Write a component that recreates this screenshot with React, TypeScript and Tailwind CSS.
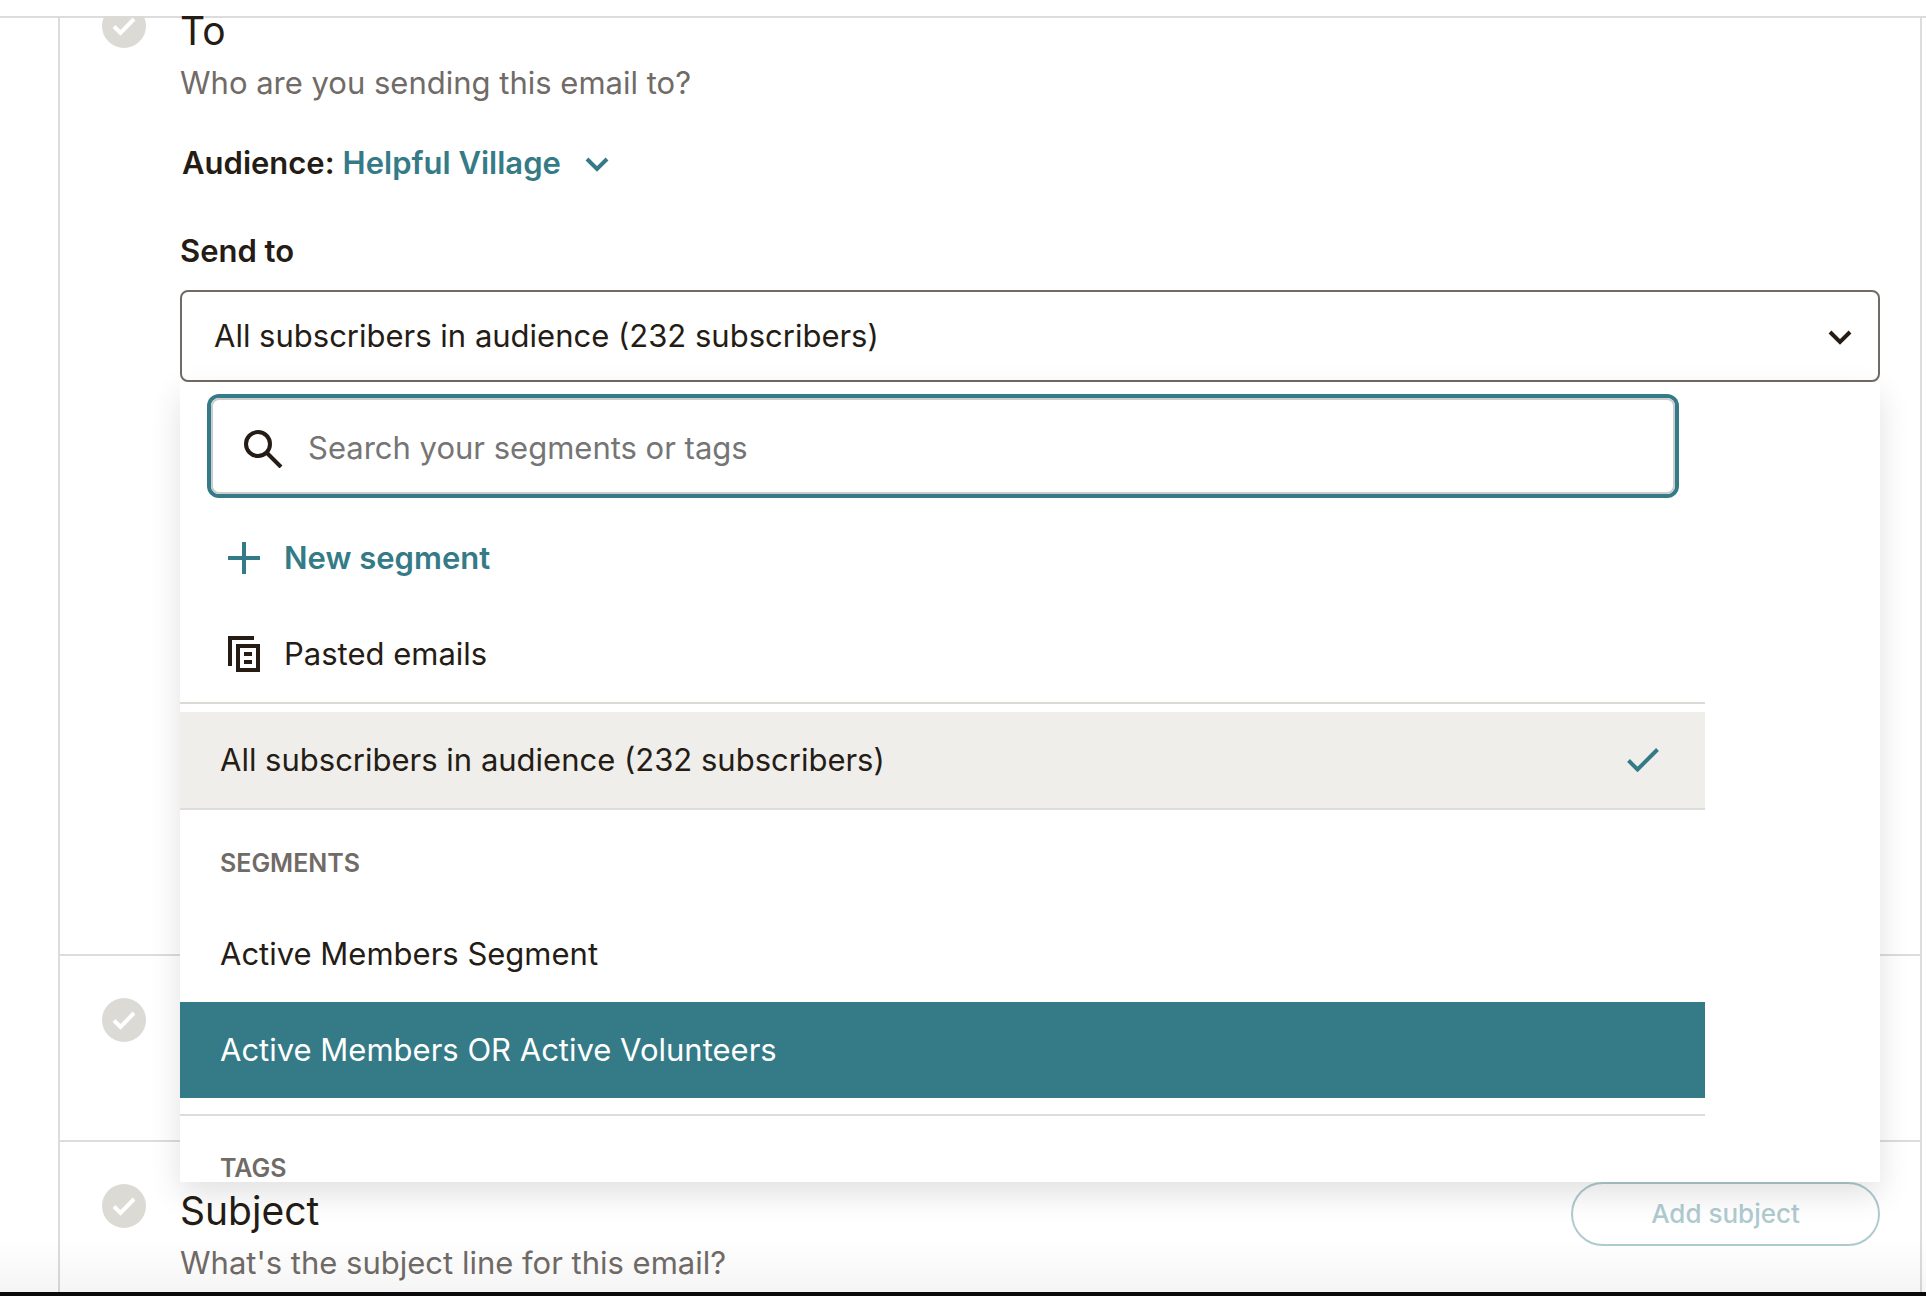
import React, { useState } from 'react';

const CheckCircle = () => (
    <svg width="44" height="44" viewBox="0 0 44 44" className="mt-0.5 shrink-0" aria-hidden="true">
        <circle cx="22" cy="22" r="22" fill="#dbdad5" />
        <path d="M12 22.5L18.5 29L32 15" fill="none" stroke="#fff" strokeWidth="4" />
    </svg>
);

const Chevron = () => (
    <svg width="24" height="24" viewBox="0 0 24 24" aria-hidden="true">
        <path d="M2 8L12 18L22 8" fill="none" stroke="currentColor" strokeWidth="4" />
    </svg>
);

const SearchIcon = () => (
    <svg width="40" height="40" viewBox="0 0 40 40" fill="none" stroke="#241c15" strokeWidth="4" className="shrink-0" aria-hidden="true">
        <circle cx="14" cy="16" r="12" />
        <path d="M22.5 24.5L37 39" />
    </svg>
);

const PlusIcon = () => (
    <svg width="32" height="32" viewBox="0 0 32 32" className="shrink-0" aria-hidden="true">
        <path d="M16 0V32M0 16H32" stroke="currentColor" strokeWidth="4" />
    </svg>
);

const PasteIcon = () => (
    <svg width="32" height="36" viewBox="0 0 32 36" fill="none" stroke="currentColor" strokeWidth="4" className="shrink-0" aria-hidden="true">
        <path d="M26 2H2V30M10 10H30V34H10ZM16 18H24M16 26H24" />
    </svg>
);

export default function App() {
    const [query, setQuery] = useState('');

    return (
        <div className="h-screen flex flex-col overflow-hidden bg-white pt-4 font-['Inter','Liberation_Sans',sans-serif] text-[31px] leading-[48px] text-[#241c15]">
            <main className="relative flex-1 min-h-0 overflow-hidden">
                <div className="h-0.5 bg-[#dcdcdc]" />
                <div className="ml-[58px] mr-1 -mt-4 border-x-2 border-[#dcdcdc]">
                    {/* To */}
                    <section className="flex h-[954px] gap-[34px] border-b-2 border-[#dcdcdc] pl-[42px] pr-10">
                        <CheckCircle />
                        <div className="flex-1 min-w-0">
                            <h2 className="text-[39px] leading-[57px]">To</h2>
                            <p className="text-[#706b67]">Who are you sending this email to?</p>
                            <p className="mt-8 flex items-center pl-[2px] font-semibold">
                                Audience:
                                <button className="ml-2 flex items-center gap-6 text-[#357b87]">
                                    Helpful Village <Chevron />
                                </button>
                            </p>
                            <p id="send-to" className="mt-10 font-semibold">Send to</p>

                            <div className="relative mt-[15px]">
                                <button aria-labelledby="send-to" className="flex h-[92px] w-full items-center justify-between rounded-lg border-2 border-[#706b67] pl-8 pr-[26px]">
                                    All subscribers in audience (232 subscribers)
                                    <Chevron />
                                </button>

                                {/* Dropdown */}
                                <div className="absolute inset-x-0 top-full z-10 h-[800px] bg-white shadow-[0_12px_30px_rgba(0,0,0,0.12)]">
                                    <div className="mr-[175px] h-full overflow-hidden">
                                        <label className="ml-[31px] mr-[30px] mt-4 flex h-24 items-center gap-6 rounded-lg border-2 border-[#cccccc] pl-[31px] pt-1 ring-4 ring-[#357b87]">
                                            <SearchIcon />
                                            <input
                                                type="text"
                                                aria-label="Search your segments or tags"
                                                value={query}
                                                onChange={(e) => setQuery(e.target.value)}
                                                placeholder="Search your segments or tags"
                                                className="min-w-0 flex-1 placeholder:text-[#757575] focus:outline-none"
                                            />
                                        </label>
                                        <button className="mt-4 flex h-24 w-full items-center gap-6 pl-12 font-semibold text-[#357b87]">
                                            <PlusIcon /> New segment
                                        </button>
                                        <button className="flex h-[98px] w-full items-center gap-6 border-b-2 border-[#dbdad5] pl-12">
                                            <PasteIcon /> Pasted emails
                                        </button>
                                        <button className="mt-2 flex h-[98px] w-full items-center justify-between border-b-2 border-[#dcdcdc] bg-[#efeeea] pl-10 pr-[46px]">
                                            All subscribers in audience (232 subscribers)
                                            <svg width="32" height="24" viewBox="0 0 32 24" aria-hidden="true">
                                                <path d="M1.5 12.5L10.5 21.5L30.5 1.5" fill="none" stroke="#357b87" strokeWidth="4" />
                                            </svg>
                                        </button>
                                        <h3 className="flex h-24 items-center pt-2.5 pl-10 text-[25px] font-semibold text-[#706b67]">SEGMENTS</h3>
                                        <button className="flex h-24 w-full items-center pl-10">Active Members Segment</button>
                                        <button className="flex h-24 w-full items-center bg-[#357b87] pl-10 text-white">Active Members OR Active Volunteers</button>
                                        <h3 className="mt-4 flex h-24 items-center border-t-2 border-[#dcdcdc] pt-2.5 pl-10 text-[25px] font-semibold text-[#706b67]">TAGS</h3>
                                    </div>
                                </div>
                            </div>
                        </div>
                    </section>

                    {/* From */}
                    <section className="h-[186px] border-b-2 border-[#dcdcdc] pl-[42px] pt-10">
                        <CheckCircle />
                    </section>

                    {/* Subject */}
                    <section className="flex gap-[34px] pl-[42px] pr-10 pt-10 pb-16">
                        <CheckCircle />
                        <div className="flex-1">
                            <h2 className="text-[39px] leading-[57px]">Subject</h2>
                            <p className="text-[#706b67]">What's the subject line for this email?</p>
                        </div>
                        <button className="h-16 w-[309px] rounded-full border-2 border-[#b0cbd0] text-[26px] font-medium text-[#b0cbd0]">Add subject</button>
                    </section>
                </div>
                <div className="pointer-events-none absolute inset-x-0 bottom-0 h-14 bg-linear-to-t from-black/4 to-transparent" />
            </main>
            <footer className="h-1 shrink-0 bg-[#0b090b]" />
        </div>
    );
}
